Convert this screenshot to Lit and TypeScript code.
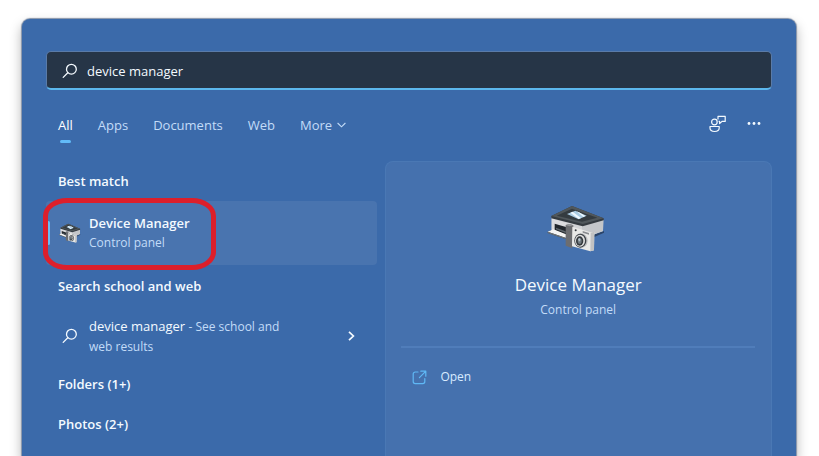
import { LitElement, html, css, svg } from "lit";
import { customElement, property, state } from "lit/decorators.js";
import { classMap } from "lit/directives/class-map.js";

const magnifier = html`<svg class="glyph" width="16" height="16" viewBox="0 0 16 16" fill="none" stroke="currentColor" stroke-width="1.3" stroke-linecap="round" aria-hidden="true">
  <circle cx="9.4" cy="6.2" r="4.9" /><path d="M5.8 9.8 1.2 14.4" />
</svg>`;

const deviceArt = svg`
  <path d="M54 131 66 122 108 138 108 150Z" fill="#2c3a4e" />
  <path d="M190 138 224 126 224 131 190 146Z" fill="#2b4468" />
  <path d="M67 84 158 108 222 92 221 126 188 138 120 150 67 128Z" fill="#d3d4d6" />
  <path d="M158 110 222 93 221 126 190 138 158 146Z" fill="#c4c6c9" />
  <path d="M67 88 112 103 112 146 67 128Z" fill="#dcdcde" />
  <path d="M66 81 128 51 223 88 223 94 160 112 66 88Z" fill="#353b40" />
  <path d="M66 81 128 51 223 88 160 105Z" fill="#50575b" />
  <path d="M82 80 128 59 204 86 158 98Z" fill="#343b40" />
  <path d="M113 75 138 65 172 80 148 91Z" fill="#a9cbe2" />
  <path d="M123 71 130 68 155 87 148 90Z M142 67 149 70 168 81 162 84Z" fill="#eef8ff" />
  <path d="M76 104 110 114 110 138 76 124Z" fill="#22272c" />
  <path d="M80 116 109 127 109 132 80 121Z" fill="#5f666b" />
  <path d="M55 128 72 121 110 136 108 146Z" fill="#f5f5f4" />
  <path d="M55 128 108 146 108 150 55 132Z" fill="#707578" />
  <path d="M109 108 121 105 132 109 129 178 109 170Z" fill="#6c6d70" />
  <path d="M109 108 121 105 132 109 121 112Z" fill="#96979a" />
  <path d="M129 113 184 130 195 129 194 184 183 187 128 172Z" fill="#e9e9e7" />
  <path d="M184 131 195 128 194 184 183 187Z" fill="#c2c2c2" />
  <path d="M160 126 179 132 179 137 160 131Z" fill="#8b8d90" />
  <circle cx="139" cy="124" r="3" fill="#33383d" />
  <ellipse cx="155" cy="155" rx="20" ry="22" fill="#bcbdbe" />
  <ellipse cx="153" cy="155" rx="18" ry="21" fill="#3c4146" />
  <ellipse cx="152" cy="155" rx="15" ry="18" fill="#e0e0df" />
  <ellipse cx="151" cy="156" rx="11" ry="14" fill="#34393d" />
  <ellipse cx="151" cy="156" rx="6" ry="9" fill="#70797f" />
  <path d="M146 150 151 147 154 153 149 158Z" fill="#b9c6ce" />`;

@customElement("device-icon")
export class DeviceIcon extends LitElement {
  @property({ type: Boolean, reflect: true }) small = false;

  static styles = css`
    :host { display: block; flex: none; width: 64px; height: 48px; }
    :host([small]) { width: 22px; height: 20px; }
    .art { display: block; width: 100%; height: 100%; }
  `;

  render() {
    return html`<svg class="art" viewBox=${this.small ? "54 46 176 144" : "50 51 192 144"} preserveAspectRatio="none" aria-hidden="true">${deviceArt}</svg>`;
  }
}

@customElement("app-root")
export class AppRoot extends LitElement {
  @state() private tab = "All";
  @state() private query = "device manager";

  static styles = css`
    :host {
      display: flex;
      box-sizing: border-box;
      height: 100vh;
      overflow: hidden;
      padding: 19px 23px 0 22px;
      background: #fff;
      color: #f4faff;
      font: 13px/20px "Open Sans", "Noto Sans", sans-serif;
    }
    * { box-sizing: border-box; }
    button { font: inherit; color: inherit; background: none; border: 0; padding: 0; margin: 0; text-align: left; cursor: pointer; }
    h2, p { margin: 0; font: inherit; }
    svg { display: block; flex: none; }
    .panel {
      flex: 1;
      min-width: 0;
      display: flex;
      flex-direction: column;
      padding: 32px 24px 0;
      background: #3b6aaa;
      border-radius: 8px 8px 0 0;
      box-shadow: 0 0 1px 1px #8593a8, 0 6px 12px 1px rgba(0, 0, 0, 0.28);
    }
    .search {
      display: flex;
      align-items: center;
      gap: 9px;
      height: 39px;
      padding: 1px 15px 0;
      background: #263547;
      border: 1px solid #5a7ba8;
      border-bottom: 2px solid #5cb8ee;
      border-radius: 5px;
    }
    .field { flex: 1; min-width: 0; padding: 0; border: 0; outline: 0; background: none; color: inherit; font: inherit; }
    .bar { display: flex; align-items: flex-start; justify-content: space-between; padding: 25px 10px 0 12px; }
    .tabs { display: flex; gap: 25px; }
    .tab { display: flex; align-items: center; gap: 5px; color: #c3dcf8; height: 28px; padding-bottom: 8px; position: relative; }
    .tab.on { color: #fff; }
    .tab.on::after { content: ""; position: absolute; left: 2px; right: 2px; bottom: 0; height: 3px; border-radius: 2px; background: #62bbf8; }
    .tools { display: flex; align-items: center; gap: 20px; }
    .body { flex: 1; display: grid; grid-template-columns: minmax(0, 6fr) minmax(0, 7fr); gap: 8px; padding-top: 18px; }
    .head { display: block; font-weight: 600; padding: 10px 12px; }
    .results { display: flex; flex-direction: column; align-items: stretch; }
    .best { position: relative; }
    .item { display: flex; align-items: center; width: 100%; gap: 9px; padding-left: 13px; }
    .selected { height: 64px; background: #4974af; border-radius: 4px; gap: 8px; }
    .selected::before { content: ""; position: absolute; left: 1px; top: 20px; width: 3px; height: 24px; border-radius: 2px; background: #6bbcf3; }
    .name { display: block; font-weight: 600; }
    .sub { display: block; font-size: 12px; color: #c3dcf8; }
    .ring { position: absolute; left: -3px; top: -3px; width: 173px; height: 72px; border: 5px solid #dc1f2b; border-radius: 24px / 18px; pointer-events: none; }
    .tight { padding: 11px 12px; }
    .web { padding: 9px 22px 8px 16px; gap: 11px; }
    .copy { flex: 1; padding-right: 48px; }
    .hint { font-size: 12px; line-height: 16px; color: #c3dcf8; }
    .preview { display: flex; flex-direction: column; padding: 44px 16px 0 15px; background: #4571ae; border: 1px solid #4a78b4; border-bottom: 0; border-radius: 8px 8px 0 0; }
    .hero { display: flex; flex-direction: column; align-items: center; padding-bottom: 26px; border-bottom: 2px solid #507dba; }
    .title { font-size: 17px; line-height: 24px; padding-top: 19px; margin-bottom: 3px; }
    .open { display: flex; align-items: center; gap: 13px; padding: 19px 11px; font-size: 12px; color: #d8ebff; }
    .launch { color: #5fb8f5; }
  `;

  private renderTab(name: string) {
    return html`<button class=${classMap({ tab: true, on: this.tab === name })} role="tab"
      aria-selected=${this.tab === name ? "true" : "false"} @click=${() => (this.tab = name)}>${name}${name === "More"
        ? html`<svg width="9" height="6" viewBox="0 0 9 6" fill="none" stroke="currentColor" stroke-width="1.1" aria-hidden="true"><path d="M.6 1 4.5 4.8 8.4 1" /></svg>`
        : ""}</button>`;
  }

  render() {
    return html`
      <main class="panel">
        <label class="search">
          ${magnifier}
          <input class="field" type="text" aria-label="Search" .value=${this.query}
            @input=${(e: Event) => (this.query = (e.target as HTMLInputElement).value)} />
        </label>
        <div class="bar">
          <div class="tabs" role="tablist">${["All", "Apps", "Documents", "Web", "More"].map((t) => this.renderTab(t))}</div>
          <div class="tools">
            <button aria-label="Feedback">
              <svg width="18" height="18" viewBox="0 0 18 18" fill="none" stroke="currentColor" stroke-width="1.2" stroke-linejoin="round" aria-hidden="true">
                <circle cx="6.4" cy="7" r="2.8" />
                <path d="M2 11.5h9.2v1.6c0 2-1.9 3.4-4.6 3.4S2 15.100 2 13.100z" />
                <path d="M10 4.500V1.400h7.200v5h-3.200L11.600 8.600V6.400h-1" />
              </svg>
            </button>
            <button aria-label="Options">
              <svg width="16" height="16" viewBox="0 0 16 16" fill="currentColor" aria-hidden="true">
                <circle cx="3" cy="7.500" r="1.400" /><circle cx="8" cy="7.500" r="1.400" /><circle cx="13" cy="7.500" r="1.400" />
              </svg>
            </button>
          </div>
        </div>
        <div class="body">
          <section class="results">
            <h2 class="head">Best match</h2>
            <div class="best">
              <button class="item selected">
                <device-icon small></device-icon>
                <span><span class="name">Device Manager</span><span class="sub">Control panel</span></span>
              </button>
              <span class="ring"></span>
            </div>
            <h2 class="head tight">Search school and web</h2>
            <button class="item web">
              ${magnifier}
              <span class="copy">device manager <span class="hint">- See school and</span> <span class="hint">web results</span></span>
              <svg width="7" height="12" viewBox="0 0 7 12" fill="none" stroke="currentColor" stroke-width="1.7" aria-hidden="true"><path d="M1 1.8 5.4 6 1 10.2" /></svg>
            </button>
            <button class="head">Folders (1+)</button>
            <button class="head">Photos (2+)</button>
          </section>
          <section class="preview">
            <div class="hero">
              <device-icon></device-icon>
              <h2 class="title">Device Manager</h2>
              <p class="sub">Control panel</p>
            </div>
            <button class="open">
              <svg class="launch" width="15" height="15" viewBox="0 0 15 15" fill="none" stroke="currentColor" stroke-width="1.2" stroke-linecap="round" stroke-linejoin="round" aria-hidden="true">
                <path d="M6 2H3.2A2 2 0 0 0 1.2 4v7.6a2 2 0 0 0 2 2h7.6a2 2 0 0 0 2-2V8.6M8.8 1.2h5v5M13.6 1.4 7.4 7.6" />
              </svg>
              Open
            </button>
          </section>
        </div>
      </main>`;
  }
}
